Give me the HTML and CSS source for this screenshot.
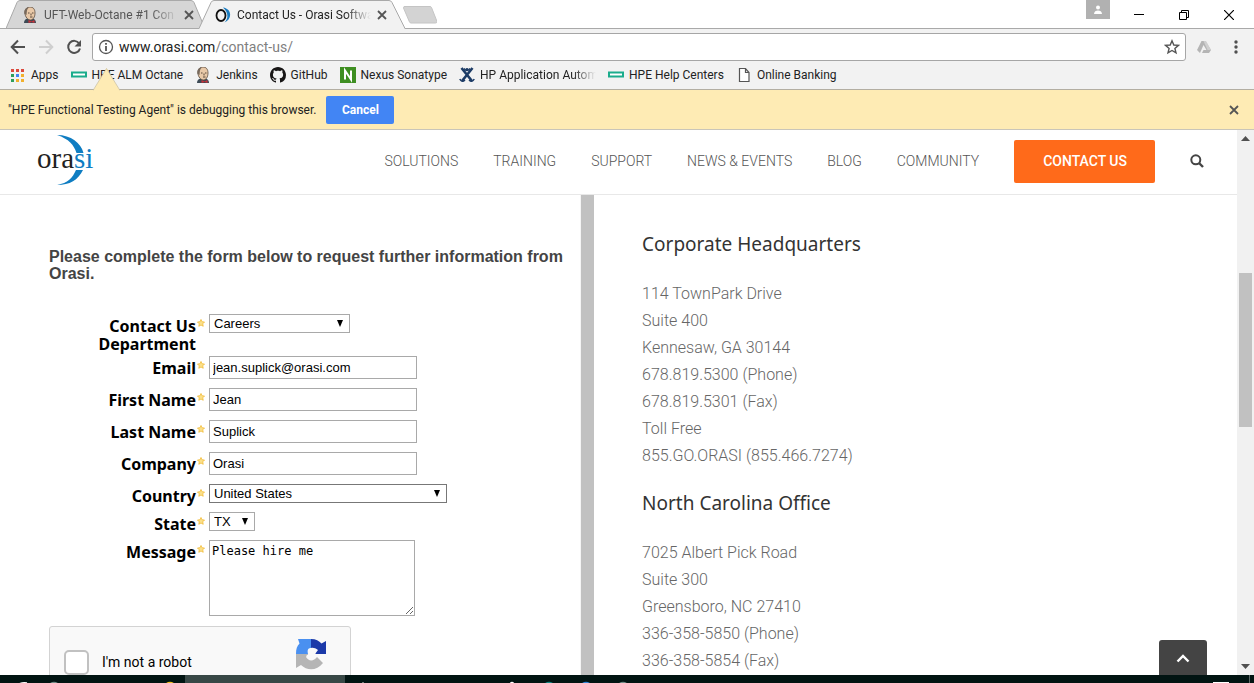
FILE: index.html
```html
<!DOCTYPE html>
<html lang="en">
<head>
<meta charset="utf-8">
<title>Contact Us - Orasi Software</title>
<link rel="stylesheet" href="styles.css">
</head>
<body>
<svg class="defs" width="0" height="0" aria-hidden="true">
  <symbol id="butler" viewBox="0 0 16 16">
    <path d="M2 16c0-2 1-4 3-4.500h6c2 .5 3 2.500 3 4.500z" fill="#3d4a55"/>
    <path d="M3 6c0-4 2-6 5-6s5 2 5 6c0 4-2 7-4.500 7S3 10 3 6z" fill="#e9c9a8" stroke="#5b4a3e" stroke-width=".8"/>
    <path d="M2.500 7C1.500 3 4 0 7 .5 4.500 2 5 5 4.500 8z" fill="#77695c"/>
    <path d="M6 6h1.500M10 6h1.500M8 10h2.500M9 6.500v2" stroke="#4a3a30" stroke-width=".9"/>
    <path d="M6.500 13l3 1.500 3-1.500v3l-3-1-3 1z" fill="#c8323a"/>
  </symbol>
  <symbol id="hpe" viewBox="0 0 16 16"><path d="M1 5.500h14v4H1z" fill="#fff" stroke="#1aac8c" stroke-width="2"/></symbol>
  <symbol id="star" viewBox="0 0 9 9"><path d="M4.500.5l1.200 2.600 2.800.3-2 2 .5 2.800-2.500-1.400L2 8.200l.5-2.800-2-2 2.800-.3z" fill="#fbe08a" stroke="#efb62c" stroke-width=".8"/></symbol>
  <symbol id="cross" viewBox="0 0 10 10"><path d="M1 1l8 8M9 1L1 9" fill="none" stroke="#555" stroke-width="1.800"/></symbol>
</svg>

<div class="tabstrip">
  <div class="tab">
    <svg class="tab-shape" viewBox="0 0 200 29" preserveAspectRatio="none"><path d="M0 28.500L11 2.500Q12 .5 14 .5H185Q187 .5 188 2.500L199 28.500z" fill="#d6d6d6" stroke="#a9a9a9"/></svg>
    <svg class="i16"><use href="#butler"/></svg>
    <span class="tab-title">UFT-Web-Octane #1 Con</span>
    <button class="plain" aria-label="Close tab"><svg class="i10"><use href="#cross"/></svg></button>
  </div>
  <div class="tab active">
    <svg class="tab-shape" viewBox="0 0 206 29" preserveAspectRatio="none"><path d="M0 29L12 2.500Q13 .5 15 .5H190Q192 .5 193 2.500L206 29z" fill="#f2f2f2"/><path d="M0 28.500L12 2.500Q13 .5 15 .5H190Q192 .5 193 2.500L206 28.500" fill="none" stroke="#a9a9a9"/></svg>
    <svg class="i16" viewBox="0 0 16 16"><ellipse cx="6" cy="8.500" rx="4.500" ry="5.500" fill="none" stroke="#111" stroke-width="1.800"/><path d="M8 .5c9 1 9.500 12 1.500 15C14 11 13 5 8 .5z" fill="#1a7cc0"/></svg>
    <span class="tab-title">Contact Us - Orasi Softwa</span>
    <button class="plain" aria-label="Close tab"><svg class="i10"><use href="#cross"/></svg></button>
  </div>
  <button class="plain newtab" aria-label="New tab"><svg width="34" height="18" viewBox="0 0 34 18"><path d="M1 .5h26q1 0 1.500 1L34 15.500q0 1.500-1.500 1.500H8q-1 0-1.500-1L.5 2z" fill="#d3d3d3" stroke="#c4c4c4"/></svg></button>
  <div class="window-controls">
    <span class="profile"><svg width="10" height="10" viewBox="0 0 10 10" fill="#fff"><circle cx="5" cy="2.500" r="2"/><path d="M1 9c0-2.500 2-3.500 4-3.500S9 6.500 9 9z"/></svg></span>
    <button class="plain" aria-label="Minimize"><svg class="i10" viewBox="0 0 10 10"><path d="M0 4.500h10" stroke="#000"/></svg></button>
    <button class="plain" aria-label="Restore"><svg class="i10" viewBox="0 0 10 10" fill="none" stroke="#000"><path d="M.5 2.500h7v7h-7zM2.500 2.500v-2h7v7h-2"/></svg></button>
    <button class="plain" aria-label="Close"><svg class="i10" viewBox="0 0 10 10"><path d="M0 0l10 10M10 0L0 10" stroke="#000" stroke-width="1.200"/></svg></button>
  </div>
</div>

<div class="toolbar">
  <button class="plain" aria-label="Back"><svg class="i16" viewBox="0 0 16 16"><path d="M15 8H2M8 1.500L1.700 8 8 14.500" fill="none" stroke="#505050" stroke-width="2"/></svg></button>
  <button class="plain" aria-label="Forward"><svg class="i16" viewBox="0 0 16 16"><path d="M1 8h12M8 1.500L14.300 8 8 14.500" fill="none" stroke="#cfcfcf" stroke-width="2"/></svg></button>
  <button class="plain" aria-label="Reload"><svg class="i16" viewBox="0 0 16 16"><path d="M13.200 4.500A6 6 0 1 0 14 9.500" fill="none" stroke="#505050" stroke-width="2"/><path d="M15 1v6.500H8.500z" fill="#505050"/></svg></button>
  <div class="omnibox">
    <svg class="i16" viewBox="0 0 16 16"><circle cx="8" cy="8" r="6.500" fill="none" stroke="#555" stroke-width="1.300"/><path d="M8 7v5M8 4v1.700" stroke="#555" stroke-width="1.800"/></svg>
    <span class="url">www.orasi.com<span class="path">/contact-us/</span></span>
    <button class="plain" aria-label="Bookmark this page"><svg class="i16" viewBox="0 0 16 16"><path d="M8 1.800l1.800 4.200 4.600.4-3.500 3 1.100 4.500L8 11.500l-4 2.400 1.100-4.500-3.500-3 4.600-.4z" fill="none" stroke="#555" stroke-width="1.400"/></svg></button>
  </div>
  <svg class="drive i16" viewBox="0 0 16 16"><path d="M5.500 2h4l5.500 9-2 3H6l1.500-3h3L7.500 6 4 14 1 11z" fill="#b5b5b5"/><path d="M7.500 2h2.500l5 9h-3.500z" fill="#d0d0d0"/></svg>
  <button class="plain" aria-label="Menu"><svg class="i16" viewBox="0 0 16 16" fill="#505050"><circle cx="8" cy="3" r="1.700"/><circle cx="8" cy="8" r="1.700"/><circle cx="8" cy="13" r="1.700"/></svg></button>
</div>

<nav class="bookmarks" aria-label="Bookmarks">
  <a href="#"><svg class="i16" viewBox="0 0 16 16"><path d="M1 2h3v3H1zM6 2h3v3H6zM11 2h3v3h-3z" fill="#dc4a3d"/><path d="M1 7h3v3H1z" fill="#2f9e5b"/><path d="M6 7h3v3H6z" fill="#4285f4"/><path d="M11 7h3v3h-3zM6 12h3v3H6zM11 12h3v3h-3z" fill="#f2b02c"/><path d="M1 12h3v3H1z" fill="#2f9e5b"/></svg>Apps</a>
  <a href="#"><svg class="i16"><use href="#hpe"/></svg>HPE ALM Octane</a>
  <a href="#"><svg class="i16"><use href="#butler"/></svg>Jenkins</a>
  <a href="#"><svg class="i16" viewBox="0 0 16 16"><path fill="#181616" d="M8 0C3.580 0 0 3.580 0 8c0 3.540 2.290 6.530 5.470 7.590.4.070.55-.17.55-.38 0-.19-.01-.82-.01-1.490-2.010.37-2.530-.49-2.690-.94-.09-.23-.48-.94-.82-1.130-.28-.15-.68-.52-.01-.53.63-.01 1.080.58 1.230.82.72 1.210 1.870.87 2.330.66.07-.52.28-.87.51-1.070-1.780-.2-3.640-.89-3.640-3.950 0-.87.31-1.590.82-2.150-.08-.2-.36-1.020.08-2.120 0 0 .67-.21 2.200.82.64-.18 1.320-.27 2-.27s1.360.09 2 .27c1.530-1.040 2.200-.82 2.200-.82.44 1.100.16 1.920.08 2.120.51.56.82 1.270.82 2.150 0 3.070-1.870 3.750-3.650 3.950.29.25.54.73.54 1.480 0 1.070-.01 1.930-.01 2.200 0 .21.15.46.55.38A8.010 8.010 0 0 0 16 8c0-4.420-3.580-8-8-8z"/></svg>GitHub</a>
  <a href="#"><svg class="i16" viewBox="0 0 16 16"><rect width="16" height="16" fill="#3f8f22"/><path d="M5 12.500v-9l6 9v-9" fill="none" stroke="#fff" stroke-width="2"/></svg>Nexus Sonatype</a>
  <a href="#"><svg class="i16" viewBox="0 0 16 16"><path d="M2.500 1L13 14M13.500 1L3 14" fill="none" stroke="#1d3c66" stroke-width="2.600"/><path d="M5 1.500q3 4 6 0M.8 12q2 4 5.200 1M15.200 12q-2 4-5.200 1" fill="none" stroke="#1d3c66" stroke-width="1.600"/><circle cx="8" cy="2.300" r="1.300" fill="#1d3c66"/></svg><span class="fade">HP Application Autom</span></a>
  <a href="#"><svg class="i16"><use href="#hpe"/></svg>HPE Help Centers</a>
  <a href="#"><svg class="i16" viewBox="0 0 16 16"><path d="M3.500 1.500h6l3.500 4v9H3.500zM9.500 1.500v4H13" fill="#fff" stroke="#555" stroke-width="1.200"/></svg>Online Banking</a>
</nav>

<div class="infobar">
  <svg class="infobar-arrow" width="27" height="23" viewBox="0 0 27 23"><path d="M0 23L13.500 0 27 23z" fill="#feebb4"/><path d="M0 22.500L13.500 .5 27 22.500" fill="none" stroke="#c9bd9c" stroke-width=".7"/></svg>
  <span>"HPE Functional Testing Agent" is debugging this browser.</span>
  <button class="cancel">Cancel</button>
  <button class="plain dismiss" aria-label="Dismiss"><svg class="i10"><use href="#cross"/></svg></button>
</div>

<div class="viewport">
  <div class="page">
    <header class="site-header">
      <a class="logo" href="#" aria-label="Orasi">
        <svg width="62" height="52" viewBox="0 0 62 52"><path d="M21 0C35 0 45 8 47.500 18H40.500C38 10 33 4 21 0zM21 50C34 50 42 45 47 35H40C36.500 43 32 48 21 50z" fill="#0f7dc2"/><text x="1" y="33" class="wordmark">ora<tspan class="blue">si</tspan></text></svg>
      </a>
      <nav class="site-nav">
        <a href="#">SOLUTIONS</a>
        <a href="#">TRAINING</a>
        <a href="#">SUPPORT</a>
        <a href="#">NEWS &amp; EVENTS</a>
        <a href="#">BLOG</a>
        <a href="#">COMMUNITY</a>
        <a class="cta" href="#">CONTACT US</a>
        <button class="plain" aria-label="Search"><svg width="14" height="14" viewBox="0 0 14 14"><circle cx="5.800" cy="5.800" r="4.500" fill="none" stroke="#444" stroke-width="2"/><path d="M9 9l4 4" stroke="#444" stroke-width="2.400"/></svg></button>
      </nav>
    </header>

    <main class="columns">
      <section class="form-col">
        <h2 class="intro">Please complete the form below to request further information from Orasi.</h2>
        <form>
          <div class="row"><label for="dept">Contact Us Department</label><svg class="req"><use href="#star"/></svg><span class="select w-dept"><select id="dept"><option>Careers</option></select></span></div>
          <div class="row"><label for="email">Email</label><svg class="req"><use href="#star"/></svg><input id="email" type="text" value="jean.suplick@orasi.com"></div>
          <div class="row"><label for="first">First Name</label><svg class="req"><use href="#star"/></svg><input id="first" type="text" value="Jean"></div>
          <div class="row"><label for="last">Last Name</label><svg class="req"><use href="#star"/></svg><input id="last" type="text" value="Suplick"></div>
          <div class="row"><label for="company">Company</label><svg class="req"><use href="#star"/></svg><input id="company" type="text" value="Orasi"></div>
          <div class="row"><label for="country">Country</label><svg class="req"><use href="#star"/></svg><span class="select dark w-country"><select id="country"><option>United States</option></select></span></div>
          <div class="row"><label for="state">State</label><svg class="req"><use href="#star"/></svg><span class="select w-state"><select id="state"><option>TX</option></select></span></div>
          <div class="row"><label for="message">Message</label><svg class="req"><use href="#star"/></svg><textarea id="message">Please hire me</textarea></div>
          <div class="captcha">
            <input type="checkbox" id="robot"><label for="robot">I'm not a robot</label>
            <svg width="32" height="32" viewBox="0 0 32 32"><path d="M16 1v9c-3 0-4 2-3 6H1C1 11 2 8 4.500 5.500L3 1z" fill="#4a90f0"/><path d="M16 1c5 0 8 2 10.500 4.500L31 3v13H20l3-4C20.500 10 18 9.500 16 10z" fill="#1c3aa9"/><path d="M1 16h13l-3 3c3 5 8 4 11 0l6 6c-6 8-16 8-22 2l-5 3z" fill="#b5b5b5"/><path d="M14 13l3 1.500 4-2-1 4.500-4 1-2 3-3-3 2-1.500z" fill="#f9f9f9"/></svg>
          </div>
        </form>
      </section>
      <div class="divider"></div>
      <section class="offices">
        <h3>Corporate Headquarters</h3>
        <address>114 TownPark Drive<br>Suite 400<br>Kennesaw, GA 30144<br>678.819.5300 (Phone)<br>678.819.5301 (Fax)<br>Toll Free<br>855.GO.ORASI (855.466.7274)</address>
        <h3>North Carolina Office</h3>
        <address>7025 Albert Pick Road<br>Suite 300<br>Greensboro, NC 27410<br>336-358-5850 (Phone)<br>336-358-5854 (Fax)</address>
      </section>
    </main>
    <button class="to-top" aria-label="Back to top"><svg width="14" height="9" viewBox="0 0 14 9"><path d="M1.500 7.500L7 2l5.500 5.500" fill="none" stroke="#fff" stroke-width="2.400"/></svg></button>
  </div>
  <div class="scrollbar">
    <svg width="9" height="5" viewBox="0 0 9 5"><path d="M0 5L4.500 0 9 5z" fill="#505050"/></svg>
    <div class="thumb"></div>
    <svg width="9" height="5" viewBox="0 0 9 5"><path d="M0 0l4.500 5L9 0z" fill="#505050"/></svg>
  </div>
</div>

<div class="taskbar">
  <svg width="640" height="8" viewBox="0 0 640 8"><rect x="185" width="160" height="8" fill="#384846"/><g fill="none" stroke-width="1.500"><path d="M19 9q4-2 8-1" stroke="#fff"/><path d="M50 9q4-3 8 0M619 9q4-3 8 0" stroke="#6f8a85"/><path d="M166 9q4-3 8 0" stroke="#f0c020"/><path d="M363 7v1" stroke="#8d9a98"/><path d="M510 9q2-3 4 0" stroke="#fff"/><path d="M545 9q4-3 8 0" stroke="#128a86"/><path d="M582 9q4-3 8 0" stroke="#2f86d8"/></g></svg>
  <svg width="42" height="8" viewBox="0 0 42 8"><rect x="1" y="7" width="16" height="1" fill="#fff"/><path d="M37.500 0v8" stroke="#5a6866"/></svg>
</div>
</body>
</html>
```
FILE: styles.css
```css
* { box-sizing: border-box; }
body {
  margin: 0;
  height: 100vh;
  display: flex;
  flex-direction: column;
  overflow: hidden;
  background: #fff;
  color: #222;
  font: 12px/16px Roboto, "Open Sans", sans-serif;
}
a { color: inherit; text-decoration: none; }
svg { display: block; flex: none; }
.defs { position: absolute; }
.i16 { width: 16px; height: 16px; }
.i10 { width: 10px; height: 10px; }
.plain { border: 0; padding: 0; background: none; display: block; flex: none; }

/* Tabs */
.tabstrip {
  display: flex;
  height: 29px;
  flex: none;
  padding-left: 6px;
  background: linear-gradient(#a9a9a9, #a9a9a9) bottom / 100% 1px no-repeat #fff;
}
.tab {
  position: relative;
  display: flex;
  align-items: center;
  gap: 6px;
  width: 200px;
  padding: 0 12px 0 16px;
  color: #555;
}
.tab.active { width: 206px; margin-left: -7px; padding: 0 18px 0 16px; color: #222; }
.tab-shape { position: absolute; inset: 0; width: 100%; height: 100%; }
.tab > :not(.tab-shape) { position: relative; }
.tab-title {
  flex: 1;
  min-width: 0;
  white-space: nowrap;
  -webkit-mask-image: linear-gradient(to right, #000 80%, transparent);
  mask-image: linear-gradient(to right, #000 80%, transparent);
}
.newtab { align-self: center; margin-left: -2px; }
.window-controls { margin-left: auto; display: flex; align-items: center; gap: 35px; padding-right: 20px; }
.profile {
  width: 24px;
  height: 19px;
  margin-right: -11px;
  align-self: flex-start;
  display: grid;
  place-items: center;
  background: #b1b1b1;
}

/* Address bar */
.toolbar { display: flex; align-items: center; gap: 12px; padding: 4px 10px 0; background: #f2f2f2; }
.omnibox {
  flex: 1;
  margin-left: -2px;
  height: 28px;
  display: flex;
  align-items: center;
  gap: 5px;
  padding: 0 5px;
  background: #fff;
  border: 1px solid #a6a6a6;
  border-radius: 3px;
}
.url { flex: 1; font-size: 14px; }
.path { color: #808080; }
.drive { margin: 0 4px 0 -2px; }

/* Bookmarks */
.bookmarks { display: flex; gap: 12px; height: 28px; align-items: center; padding-left: 10px; background: #f2f2f2; }
.bookmarks a { display: flex; gap: 5px; align-items: center; white-space: nowrap; }
.fade {
  width: 116px;
  -webkit-mask-image: linear-gradient(to right, #000 80%, transparent);
  mask-image: linear-gradient(to right, #000 80%, transparent);
}

/* Debugging notice */
.infobar {
  position: relative;
  display: flex;
  align-items: center;
  gap: 10px;
  height: 41px;
  flex: none;
  padding: 0 15px 0 8px;
  background: #feebb4;
  border-top: 1px solid #b3aea2;
  border-bottom: 1px solid #c9c5b9;
}
.infobar-arrow { position: absolute; left: 93px; bottom: 100%; margin-bottom: -1px; }
.cancel {
  width: 68px;
  height: 28px;
  border: 0;
  border-radius: 2px;
  background: #4285f4;
  color: #fff;
  font: bold 12px Roboto, sans-serif;
}
.dismiss { margin-left: auto; }

/* Page area */
.viewport { flex: 1; min-height: 0; display: flex; }
.page { position: relative; flex: 1; min-width: 0; display: flex; flex-direction: column; overflow: hidden; }
.site-header {
  display: flex;
  align-items: center;
  justify-content: space-between;
  flex: none;
  height: 65px;
  padding: 0 33px 2px 36px;
  border-bottom: 1px solid #e8e8e8;
}
.wordmark { font: 29px "Liberation Serif", serif; fill: #222; }
.wordmark .blue { fill: #0f7dc2; }
.site-nav { display: flex; align-items: center; gap: 35px; font: 300 14px/18px Roboto, sans-serif; color: #555; }
.cta { padding: 12px 28px 13px 29px; border-radius: 2px; background: #ff6a1a; color: #fff; font-weight: 500; }
.columns { flex: 1; min-height: 0; display: grid; grid-template-columns: 47fr 13px 52fr; }
.divider { background: #c1c1c1; }
.form-col { padding: 53px 12px 0 49px; border-right: 1px solid #f5f5f5; }
.intro { margin: 0 0 32px; font: bold 16px/17px "Liberation Sans", Arial, sans-serif; color: #444; }

.row { display: grid; grid-template-columns: 147px 11px auto; column-gap: 1px; justify-content: start; align-items: start; }
.row > label {
  padding: 3px 0;
  text-align: right;
  color: #000;
  font: bold 16px/18px "Noto Sans", "Open Sans", sans-serif;
}
.req { width: 8px; height: 8px; margin-top: 5px; }
.row input, .row textarea, .select { margin-bottom: 9px; }
.row input, .row textarea { border: 1px solid #a9a9a9; background: #fff; color: #000; }
.row input { width: 208px; height: 23px; padding: 0 3px; font: 13px "Liberation Sans", Arial, sans-serif; }
.row textarea { display: block; width: 206px; height: 76px; padding: 2px; font: 12px/16px "DejaVu Sans Mono", monospace; }
.select { position: relative; display: block; height: 19px; }
.select select {
  appearance: none;
  display: block;
  width: 100%;
  height: 100%;
  padding: 0 4px;
  border: 1px solid #a9a9a9;
  border-radius: 0;
  background: #fff;
  color: #000;
  font: 13px "Liberation Sans", Arial, sans-serif;
}
.select.dark select { border-color: #777; }
.select::after {
  content: "";
  position: absolute;
  right: 7px;
  top: 6px;
  border: solid transparent;
  border-width: 7px 3px 0;
  border-top-color: #000;
}
.w-dept { width: 141px; }
.w-country { width: 238px; }
.w-state { width: 46px; }

.captcha {
  display: flex;
  width: 302px;
  height: 76px;
  align-items: center;
  gap: 13px;
  margin-top: 1px;
  padding: 0 23px 3px 14px;
  border: 1px solid #d3d3d3;
  border-radius: 3px;
  background: #f9f9f9;
  font: 14px/17px Roboto, sans-serif;
  color: #000;
}
.captcha input { appearance: none; width: 25px; height: 25px; margin: 0; border: 2px solid #c1c1c1; border-radius: 5px; background: #fff; }
.captcha svg { margin: 0 0 18px auto; }

.offices { padding: 36px 0 0 48px; }
.offices h3 { margin: 0 0 22px; font: 400 19px/27px "Noto Sans", "Open Sans", sans-serif; color: #333; }
.offices address { margin-bottom: 21px; font: 300 16px/27px Roboto, sans-serif; color: #666; }

.to-top {
  position: absolute;
  right: 30px;
  bottom: 0;
  width: 48px;
  height: 35px;
  display: grid;
  place-items: center;
  border: 0;
  padding: 2px 0 0;
  border-radius: 3px 3px 0 0;
  background: #444;
}
.scrollbar {
  width: 17px;
  display: flex;
  flex-direction: column;
  align-items: center;
  justify-content: space-between;
  padding: 6px 0;
  background: #f1f1f1;
}
.thumb { width: 13px; height: 29%; margin-bottom: 105px; background: #c1c1c1; }
.taskbar { display: flex; justify-content: space-between; height: 8px; flex: none; overflow: hidden; background: #011412; }
```
